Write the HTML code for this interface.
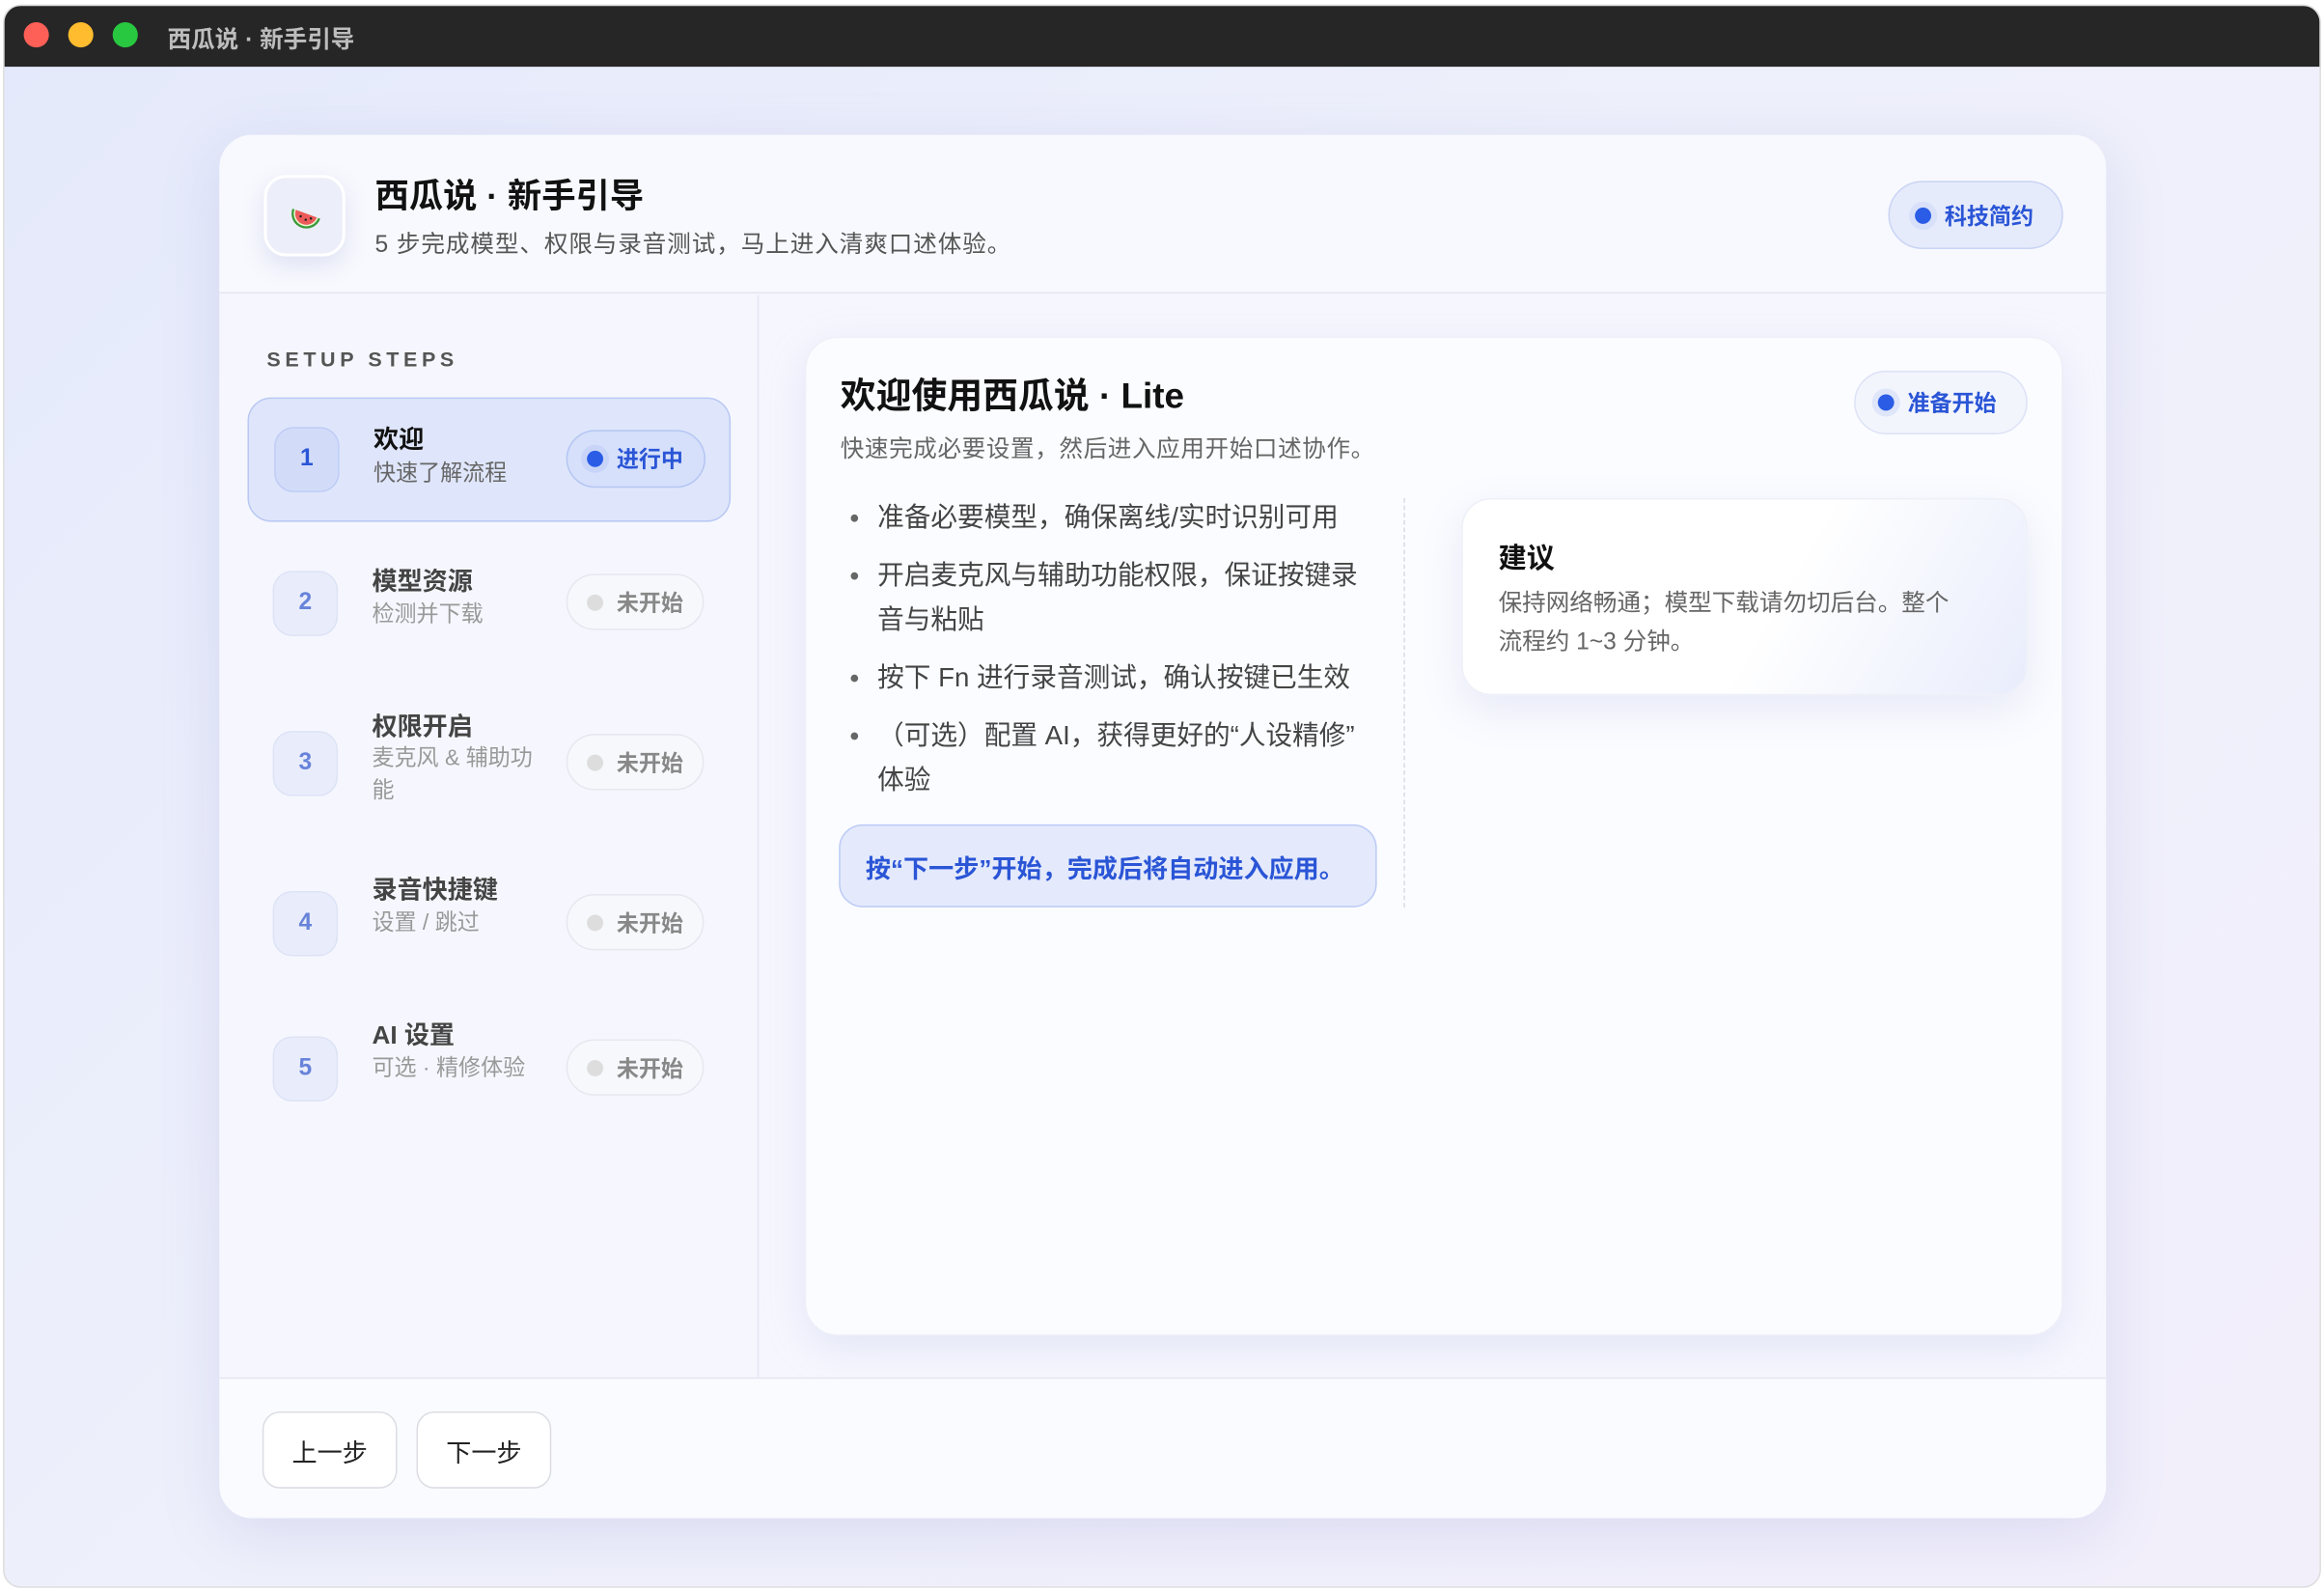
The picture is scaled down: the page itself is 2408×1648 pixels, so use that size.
<!DOCTYPE html>
<html><head><meta charset="utf-8"><style>
*{box-sizing:border-box;margin:0;padding:0}
html,body{width:2408px;height:1648px;overflow:hidden;background:#fff}
body{font-family:"Liberation Sans","Noto Sans CJK SC",sans-serif}
#s{position:absolute;left:0;top:0;width:1568px;height:1073px;transform:scale(1.5357);transform-origin:0 0}
.win{position:absolute;left:2px;top:3px;width:1564px;height:1068px;border-radius:12px;overflow:hidden;background:linear-gradient(135deg,#e4e9fb 0%,#eef0fb 45%,#f2effb 100%);border:1px solid #ddd}
.tb{position:absolute;left:0;top:0;width:100%;height:41px;background:#262626}
.tl{position:absolute;top:11px;width:17px;height:17px;border-radius:50%}
.tt{position:absolute;left:110px;top:9px;color:#bdbdbd;font-size:16px;font-weight:bold}
.card{position:absolute;left:145px;top:87px;width:1273px;height:933px;border-radius:22px;background:#f6f7fe;box-shadow:0 10px 40px rgba(120,130,200,.18);overflow:hidden}
.hdr{position:absolute;left:0;top:0;width:100%;height:107px;border-bottom:1px solid #e3e6f1;background:#f8f9fe}
.ico{position:absolute;left:30px;top:27px;width:55px;height:55px;border-radius:15px;background:#eceefa;border:2px solid #fff;box-shadow:0 6px 16px rgba(120,130,200,.2)}
.pill{position:absolute;border-radius:999px;display:flex;align-items:center;font-size:15px;font-weight:bold}
.dot{width:11px;height:11px;border-radius:50%;margin-right:9px}
.side{position:absolute;left:0;top:108px;width:364px;height:730px;border-right:1px solid #e3e6f1}
.step{position:absolute;left:19px;width:326px;height:84px}
.num{position:absolute;left:17px;top:20px;width:44px;height:44px;border-radius:13px;background:#e9edfb;border:1px solid #dde3f6;color:#6783da;font-weight:bold;font-size:16px;display:flex;align-items:center;justify-content:center}
.st{position:absolute;left:84px;font-size:17px;font-weight:bold;color:#444}
.ss{position:absolute;left:84px;font-size:15px;color:#999;width:120px;line-height:22px}
.np{left:215px;width:93px;height:38px;background:#f7f8fc;border:1px solid #e6e8f0;color:#888;justify-content:center}
.foot{position:absolute;left:0;top:838px;width:100%;height:95px;border-top:1px solid #e3e6f1;background:#fafbff}
.btn{position:absolute;top:22px;width:91px;height:52px;border-radius:12px;background:#fff;border:1px solid #dcdde3;font-size:17px;display:flex;align-items:center;justify-content:center;color:#222}
.cc{position:absolute;left:395px;top:136px;width:849px;height:674px;border-radius:22px;background:#fbfcff;box-shadow:0 8px 30px rgba(120,130,200,.15);border:1px solid #eef0f8}
ul{position:absolute;left:24px;top:106px;width:380px;list-style:none;font-size:18px;color:#444;line-height:30px;white-space:nowrap}
li{position:relative;padding-left:24px;margin-bottom:9px}
li:before{content:"";position:absolute;left:6px;top:13px;width:5px;height:5px;border-radius:50%;background:#666}
</style></head><body><div id="s">
<div class="win">
<div class="tb">
<div class="tl" style="left:13px;background:#fe5f57"></div>
<div class="tl" style="left:43px;background:#febc2e"></div>
<div class="tl" style="left:73px;background:#28c840"></div>
<div class="tt">西瓜说 · 新手引导</div>
</div>
<div class="card">
<div class="hdr">
<div class="ico"><svg width="51" height="51" viewBox="0 0 51 51"><g transform="rotate(20 26 26)"><path d="M16 24 A10 10 0 0 0 36 24 Z" fill="#3a9a3a"/><path d="M17.5 24 A8.5 8.5 0 0 0 34.5 24 Z" fill="#e8f5d0"/><path d="M18.5 24 A7.5 7.5 0 0 0 33.5 24 Z" fill="#ec5a5a"/><circle cx="23" cy="27" r=".8" fill="#222"/><circle cx="27" cy="28" r=".8" fill="#222"/><circle cx="30" cy="26" r=".8" fill="#222"/></g></svg></div>
<div style="position:absolute;left:105px;top:22px;font-size:23px;font-weight:bold;color:#111">西瓜说 · 新手引导</div>
<div style="position:absolute;left:105px;top:60px;font-size:16px;color:#555;letter-spacing:.6px">5 步完成模型、权限与录音测试，马上进入清爽口述体验。</div>
<div class="pill" style="left:1126px;top:31px;width:118px;height:46px;background:#e6ebfb;border:1px solid #c9d4f5;color:#2a55d6;padding-left:17px"><span class="dot" style="background:#2a5ce6;box-shadow:0 0 0 4px #d8e0fa"></span>科技简约</div>
</div>
<div class="side">
<div style="position:absolute;left:32px;top:35px;font-size:14px;font-weight:bold;letter-spacing:3px;color:#555">SETUP STEPS</div>
<div class="step" style="top:69px;background:#dfe6fb;border:1px solid #b9c9f4;border-radius:16px">
<div class="num" style="top:19px;background:#d2dcf9;border-color:#c0cdf5;color:#2a55d6">1</div>
<div class="st" style="top:13px;color:#111">欢迎</div><div class="ss" style="top:40px;color:#666">快速了解流程</div>
<div class="pill" style="left:214px;top:21px;width:94px;height:39px;background:#d6e0fb;border:1px solid #b5c6f3;color:#2a55d6;padding-left:13px"><span class="dot" style="background:#2a5ce6;box-shadow:0 0 0 4px #c9d5f8"></span>进行中</div>
</div>
<div class="step" style="top:166px"><div class="num">2</div><div class="st" style="top:13px">模型资源</div><div class="ss" style="top:39px">检测并下载</div><div class="pill np" style="top:22px"><span class="dot" style="background:#ddd"></span>未开始</div></div>
<div class="step" style="top:274px"><div class="num">3</div><div class="st" style="top:3px">权限开启</div><div class="ss" style="top:28px">麦克风 &amp; 辅助功能</div><div class="pill np" style="top:22px"><span class="dot" style="background:#ddd"></span>未开始</div></div>
<div class="step" style="top:382px"><div class="num">4</div><div class="st" style="top:5px">录音快捷键</div><div class="ss" style="top:31px">设置 / 跳过</div><div class="pill np" style="top:22px"><span class="dot" style="background:#ddd"></span>未开始</div></div>
<div class="step" style="top:480px"><div class="num">5</div><div class="st" style="top:5px">AI 设置</div><div class="ss" style="top:31px;width:140px">可选 · 精修体验</div><div class="pill np" style="top:22px"><span class="dot" style="background:#ddd"></span>未开始</div></div>
</div>
<div class="cc">
<div style="position:absolute;left:23px;top:19px;font-size:24px;font-weight:bold;color:#111">欢迎使用西瓜说 · Lite</div>
<div style="position:absolute;left:23px;top:61px;font-size:16px;color:#666;letter-spacing:.4px">快速完成必要设置，然后进入应用开始口述协作。</div>
<div class="pill" style="left:707px;top:22px;width:117px;height:43px;background:#f3f5fd;border:1px solid #dde3f6;color:#2a55d6;padding-left:15px"><span class="dot" style="background:#2a5ce6;box-shadow:0 0 0 4px #dfe6fa"></span>准备开始</div>
<ul>
<li>准备必要模型，确保离线/实时识别可用</li>
<li>开启麦克风与辅助功能权限，保证按键录<br>音与粘贴</li>
<li>按下 Fn 进行录音测试，确认按键已生效</li>
<li>（可选）配置 AI，获得更好的“人设精修”<br>体验</li>
</ul>
<div style="position:absolute;left:403px;top:108px;height:276px;border-left:1px dashed #d8dbe4"></div>
<div style="position:absolute;left:22px;top:328px;width:363px;height:56px;border-radius:16px;background:#e4eafc;border:1px solid #bccbf5;color:#2a55d6;font-weight:bold;font-size:17px;padding:15px 0 0 17px">按“下一步”开始，完成后将自动进入应用。</div>
<div style="position:absolute;left:442px;top:108px;width:382px;height:133px;border-radius:20px;background:linear-gradient(120deg,#fff 55%,#e9edfc 100%);box-shadow:0 10px 28px rgba(120,130,200,.15);border:1px solid #eef0f8">
<div style="position:absolute;left:24px;top:25px;font-size:19px;font-weight:bold;color:#111">建议</div>
<div style="position:absolute;left:24px;top:58px;width:318px;font-size:16px;line-height:26px;color:#666">保持网络畅通；模型下载请勿切后台。整个流程约 1~3 分钟。</div>
</div>
</div>
<div class="foot">
<div class="btn" style="left:29px">上一步</div>
<div class="btn" style="left:133px">下一步</div>
</div>
</div>
</div>
</div></body></html>
